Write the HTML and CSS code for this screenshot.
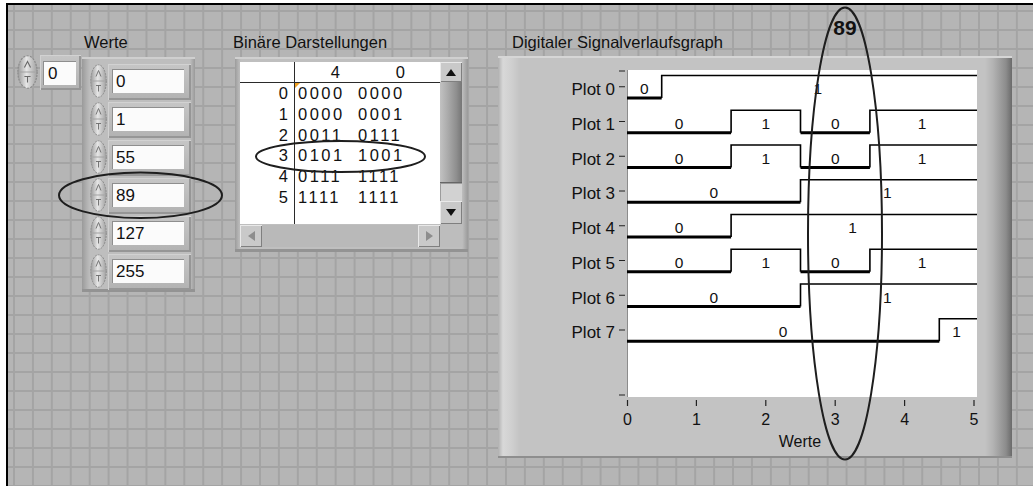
FILE: index.html
```html
<!DOCTYPE html>
<html>
<head>
	<meta charset="utf-8">
	<title>Digitaler Signalverlaufsgraph</title>
	<link rel="stylesheet" href="styles.css">
</head>
<body>
	<svg class="defs" width="0" height="0">
		<defs>
			<linearGradient id="knob" x1="0" y1="0" x2="1" y2="0">
				<stop offset="0" stop-color="#9a9a9a"/>
				<stop offset="0.45" stop-color="#e6e6e6"/>
				<stop offset="1" stop-color="#a0a0a0"/>
			</linearGradient>
			<symbol id="spin" viewBox="0 0 17 34" preserveAspectRatio="none">
				<ellipse cx="8.5" cy="17" rx="7.8" ry="16.2" fill="url(#knob)" stroke="#8c8c8c" stroke-width="1" stroke-dasharray="2 1"/>
				<path d="M2.5 17H14.5" stroke="#a2a2a2" stroke-width="1"/>
				<path d="M6 12.5L8.5 6.5L11 12.5" fill="none" stroke="#6a6a6a" stroke-width="0.9"/>
				<path d="M6 21.5H11M8.5 21.5V27.5" fill="none" stroke="#6a6a6a" stroke-width="0.9"/>
			</symbol>
		</defs>
	</svg>

	<div class="panel">
		<!-- Index -->
		<div class="index-ctl">
			<svg class="spin spin-idx"><use href="#spin" width="100%" height="100%"/></svg>
			<div class="num idx-num"><div class="num-box">0</div></div>
		</div>

		<!-- Werte (Array) -->
		<div class="group array-group">
			<div class="caption cap-werte">Werte</div>
			<div class="array-frame">
				<div class="elem"><svg class="spin"><use href="#spin" width="100%" height="100%"/></svg><div class="num"><div class="num-box">0</div></div></div>
				<div class="elem"><svg class="spin"><use href="#spin" width="100%" height="100%"/></svg><div class="num"><div class="num-box">1</div></div></div>
				<div class="elem"><svg class="spin"><use href="#spin" width="100%" height="100%"/></svg><div class="num"><div class="num-box">55</div></div></div>
				<div class="elem"><svg class="spin"><use href="#spin" width="100%" height="100%"/></svg><div class="num"><div class="num-box">89</div></div></div>
				<div class="elem"><svg class="spin"><use href="#spin" width="100%" height="100%"/></svg><div class="num"><div class="num-box">127</div></div></div>
				<div class="elem"><svg class="spin"><use href="#spin" width="100%" height="100%"/></svg><div class="num"><div class="num-box">255</div></div></div>
			</div>
		</div>

		<!-- Binaere Darstellungen (Tabelle) -->
		<div class="group table-group">
			<div class="caption cap-table">Binäre Darstellungen</div>
			<div class="table-frame">
				<div class="t-body">
					<div class="t-head"><span class="t-idx"></span><span class="t-hi">4</span><span class="t-lo">0</span></div>
					<div class="t-row cur"><span class="t-idx">0</span><span class="t-hi">0000</span><span class="t-lo">0000</span></div>
					<div class="t-row"><span class="t-idx">1</span><span class="t-hi">0000</span><span class="t-lo">0001</span></div>
					<div class="t-row"><span class="t-idx">2</span><span class="t-hi">0011</span><span class="t-lo">0111</span></div>
					<div class="t-row"><span class="t-idx">3</span><span class="t-hi">0101</span><span class="t-lo">1001</span></div>
					<div class="t-row"><span class="t-idx">4</span><span class="t-hi">0111</span><span class="t-lo">1111</span></div>
					<div class="t-row"><span class="t-idx">5</span><span class="t-hi">1111</span><span class="t-lo">1111</span></div>
				</div>
				<div class="vscroll">
					<div class="sb-btn sb-up"><i class="arr-up"></i></div>
					<div class="thumb"></div>
					<div class="track"></div>
					<div class="sb-btn sb-down"><i class="arr-down"></i></div>
				</div>
				<div class="hscroll">
					<div class="sb-btn sb-side"><i class="arr-left"></i></div>
					<div class="htrack"></div>
					<div class="sb-btn sb-side"><i class="arr-right"></i></div>
				</div>
				<div class="corner"></div>
			</div>
		</div>

		<!-- Digitaler Signalverlaufsgraph -->
		<div class="group graph-group">
			<div class="caption cap-graph">Digitaler Signalverlaufsgraph</div>
			<div class="graph-frame">
				<svg class="graph" width="514" height="402" viewBox="0 0 514 402">
					<rect x="129" y="14" width="350" height="327" fill="#fff"/>
					<path d="M129.5 14V341" stroke="#8c8c8c" stroke-width="1"/>

					<!-- y ticks -->
					<path class="tick" d="M121 15H127M121 30.75H127M121 65.5H127M121 100.25H127M121 135H127M121 169.75H127M121 204.5H127M121 239.25H127M121 274H127M121 339H127"/>
					<text class="plot-lbl" x="117" y="39">Plot 0</text>
					<text class="plot-lbl" x="117" y="73.75">Plot 1</text>
					<text class="plot-lbl" x="117" y="108.5">Plot 2</text>
					<text class="plot-lbl" x="117" y="143.25">Plot 3</text>
					<text class="plot-lbl" x="117" y="178">Plot 4</text>
					<text class="plot-lbl" x="117" y="212.75">Plot 5</text>
					<text class="plot-lbl" x="117" y="247.5">Plot 6</text>
					<text class="plot-lbl" x="117" y="282.25">Plot 7</text>

					<!-- x axis -->
					<path class="tick" d="M129.5 344V350M198.4 344V350M267.8 344V350M337.2 344V350M406.6 344V350M476 344V350"/>
					<text class="axis-lbl" x="129.5" y="369">0</text>
					<text class="axis-lbl" x="198.4" y="369">1</text>
					<text class="axis-lbl" x="267.8" y="369">2</text>
					<text class="axis-lbl" x="337.2" y="369">3</text>
					<text class="axis-lbl" x="406.6" y="369">4</text>
					<text class="axis-lbl" x="476" y="369">5</text>
					<text class="axis-lbl" x="302" y="391">Werte</text>

					<!-- low levels -->
					<path class="low" d="M129 42H163.7
						M129 76.75H233.1M302.5 76.75H371.9
						M129 111.5H233.1M302.5 111.5H371.9
						M129 146.25H302.5
						M129 181H233.1
						M129 215.75H233.1M302.5 215.75H371.9
						M129 250.5H302.5
						M129 285.25H441.3"/>
					<!-- high levels and edges -->
					<path class="high" d="M163.7 42V19.5H479
						M233.1 76.75V54.25H302.5V76.75M371.9 76.75V54.25H479
						M233.1 111.5V89H302.5V111.5M371.9 111.5V89H479
						M302.5 146.25V123.75H479
						M233.1 181V158.5H479
						M233.1 215.75V193.25H302.5V215.75M371.9 215.75V193.25H479
						M302.5 250.5V228H479
						M441.3 285.25V262.75H479"/>

					<text class="val" x="146.35" y="38">0</text>
					<text class="val" x="319.85" y="38">1</text>

					<text class="val" x="181.05" y="72.75">0</text>
					<text class="val" x="267.8" y="72.75">1</text>
					<text class="val" x="337.2" y="72.75">0</text>
					<text class="val" x="423.95" y="72.75">1</text>

					<text class="val" x="181.05" y="107.5">0</text>
					<text class="val" x="267.8" y="107.5">1</text>
					<text class="val" x="337.2" y="107.5">0</text>
					<text class="val" x="423.95" y="107.5">1</text>

					<text class="val" x="215.75" y="142.25">0</text>
					<text class="val" x="389.25" y="142.25">1</text>

					<text class="val" x="181.05" y="177">0</text>
					<text class="val" x="354.55" y="177">1</text>

					<text class="val" x="181.05" y="211.75">0</text>
					<text class="val" x="267.8" y="211.75">1</text>
					<text class="val" x="337.2" y="211.75">0</text>
					<text class="val" x="423.95" y="211.75">1</text>

					<text class="val" x="215.75" y="246.5">0</text>
					<text class="val" x="389.25" y="246.5">1</text>

					<text class="val" x="285.15" y="281">0</text>
					<text class="val" x="458.65" y="281">1</text>
				</svg>
			</div>
		</div>
	</div>

	<!-- Markierungen -->
	<svg class="marks" width="1033" height="486">
		<ellipse cx="845" cy="233.5" rx="37" ry="226"/>
		<ellipse cx="140.5" cy="195.3" rx="81.5" ry="22.7"/>
		<ellipse cx="340.5" cy="156.5" rx="84.5" ry="15.5"/>
		<text x="845" y="35">89</text>
	</svg>
</body>
</html>
```
FILE: styles.css
```css
*{margin:0;padding:0;box-sizing:border-box;}
html,body{height:100%;}
body{
	position:relative;
	overflow:hidden;
	background:#fff;
	font-family:"Liberation Sans",Arial,sans-serif;
	font-size:16.5px;
	color:#111;
}
.defs{position:absolute;width:0;height:0;}

.panel{
	height:calc(100% - 3px);
	margin:3px 0 0 6px;
	border-top:2px solid #000;
	border-left:2px solid #000;
	padding:28px 0 0 9px;
	display:flex;
	align-items:flex-start;
	background-color:#b5b5b5;
	background-image:linear-gradient(to right,#a4a4a4 2px,transparent 2px),linear-gradient(to bottom,#a4a4a4 2px,transparent 2px);
	background-size:18.93px 19px;
	background-position:5px 5px;
}
.group{display:flex;flex-direction:column;}
.caption{height:18px;line-height:18px;margin-bottom:6px;white-space:nowrap;}

/* numerics */
.spin{display:block;width:17px;height:34px;}
.spin-idx{width:21px;}
.num{
	background:linear-gradient(to bottom,#c6c6c6,#b2b2b2);
	box-shadow:inset 1px 1px 0 #d2d2d2,inset -2px -2px 0 #969696;
}
.num-box{
	height:24px;
	line-height:24px;
	font-size:17px;
	padding-left:3px;
	background:#fbfbfb;
	border-top:1px solid #8e8e8e;
	border-left:1px solid #8e8e8e;
}
.index-ctl{display:flex;align-items:flex-start;margin-top:22px;width:65px;}
.idx-num{margin-left:2px;padding:6px 5px 5px 3px;}
.idx-num .num-box{width:33px;padding-left:4px;}

.cap-werte{padding-left:2px;}
.array-frame{
	width:113px;height:235px;
	padding:7px 0 0 8px;
	background:linear-gradient(to right,#9a9a9a 0,#b2b2b2 5px,#bebebe 8px,#bebebe 108px,#9a9a9a 113px);
	box-shadow:inset 0 2px 0 #cfcfcf,inset 0 -3px 0 #939393;
}
.elem{display:flex;align-items:flex-start;height:38px;}
.elem .num{margin-left:1px;padding:5px 7px 7px 4px;}
.elem .num-box{width:72px;}

/* table */
.table-group{margin-left:40px;}
.cap-table{margin-left:-2px;}
.table-frame{
	width:233px;height:195px;
	padding:5px 6px 5px 5px;
	display:grid;
	grid-template-columns:200px 22px;
	grid-template-rows:162px 23px;
	background:linear-gradient(to right,#9c9c9c 0,#b8b8b8 4px,#bfbfbf 6px,#bfbfbf 227px,#9a9a9a 233px);
	box-shadow:inset 0 2px 0 #d0d0d0,inset 0 -3px 0 #939393;
}
.t-body{
	overflow:hidden;
	background:#fff linear-gradient(to right,transparent 54px,#2a2a2a 54px,#2a2a2a 55px,transparent 55px);
}
.t-head{display:flex;height:21px;line-height:20px;border-bottom:1px solid #2a2a2a;}
.t-row{display:flex;height:20.8px;line-height:20.8px;}
.t-idx{width:48px;text-align:right;}
.t-hi{width:60px;margin-left:10px;letter-spacing:2.5px;position:relative;}
.t-lo{width:60px;letter-spacing:2.5px;}
.t-head .t-hi{text-align:right;padding-right:18px;letter-spacing:0;}
.t-head .t-lo{text-align:right;padding-right:13px;letter-spacing:0;}
.t-row.cur .t-hi::before{
	content:"";
	position:absolute;left:-3px;top:0;
	border-top:5px solid #f0a020;
	border-right:5px solid transparent;
}

.sb-btn{
	display:flex;align-items:center;justify-content:center;
	background:#c9c9c9;
	box-shadow:inset 1px 1px 0 #e9e9e9,inset -1px -1px 0 #7f7f7f;
}
.vscroll{display:flex;flex-direction:column;}
.sb-up{height:20px;}
.sb-down{height:23px;}
.thumb{
	height:101px;
	background:linear-gradient(to right,#c2c2c2,#ababab 35%,#8e8e8e 75%,#767676);
	border-bottom:1px solid #666;
}
.track{height:18px;background:#d2d2d2;box-shadow:inset 1px 1px 0 #9c9c9c;}
.hscroll{display:flex;margin-top:1px;height:22px;}
.sb-side{width:22px;height:22px;}
.htrack{flex:1;background:#b9b9b9;}
.corner{background:#bdbdbd;}
.arr-up{border-left:5px solid transparent;border-right:5px solid transparent;border-bottom:7px solid #111;}
.arr-down{border-left:5px solid transparent;border-right:5px solid transparent;border-top:7px solid #111;}
.arr-left{border-top:5px solid transparent;border-bottom:5px solid transparent;border-right:7px solid #8d8d8d;}
.arr-right{border-top:5px solid transparent;border-bottom:5px solid transparent;border-left:7px solid #8d8d8d;}

/* graph */
.graph-group{margin-left:30px;}
.cap-graph{padding-left:14px;margin-bottom:5px;}
.graph-frame{
	width:514px;height:402px;
	background:linear-gradient(to right,#b0b0b0 0,#d8d8d8 5px,#cfcfcf 14px,#c3c3c3 22px,#c3c3c3 487px,#b3b3b3 495px,#8c8c8c 508px,#6a6a6a 514px);
	box-shadow:inset 0 2px 0 #d6d6d6,inset 0 -2px 0 #8e8e8e;
}
.graph{display:block;}
.graph text{font-family:"Liberation Sans",Arial,sans-serif;fill:#111;}
.graph .tick{stroke:#222;stroke-width:1.2;fill:none;}
.graph .plot-lbl{text-anchor:end;font-size:17px;}
.graph .axis-lbl{text-anchor:middle;font-size:16px;}
.graph .val{text-anchor:middle;font-size:15.5px;}
.graph .low{stroke:#000;stroke-width:3;fill:none;}
.graph .high{stroke:#000;stroke-width:1.6;fill:none;}

.marks{position:absolute;left:0;top:0;pointer-events:none;}
.marks ellipse{fill:none;stroke:#1e1e1e;stroke-width:2;}
.marks text{font-family:"Liberation Sans",Arial,sans-serif;font-size:21px;font-weight:bold;text-anchor:middle;fill:#111;}
```
